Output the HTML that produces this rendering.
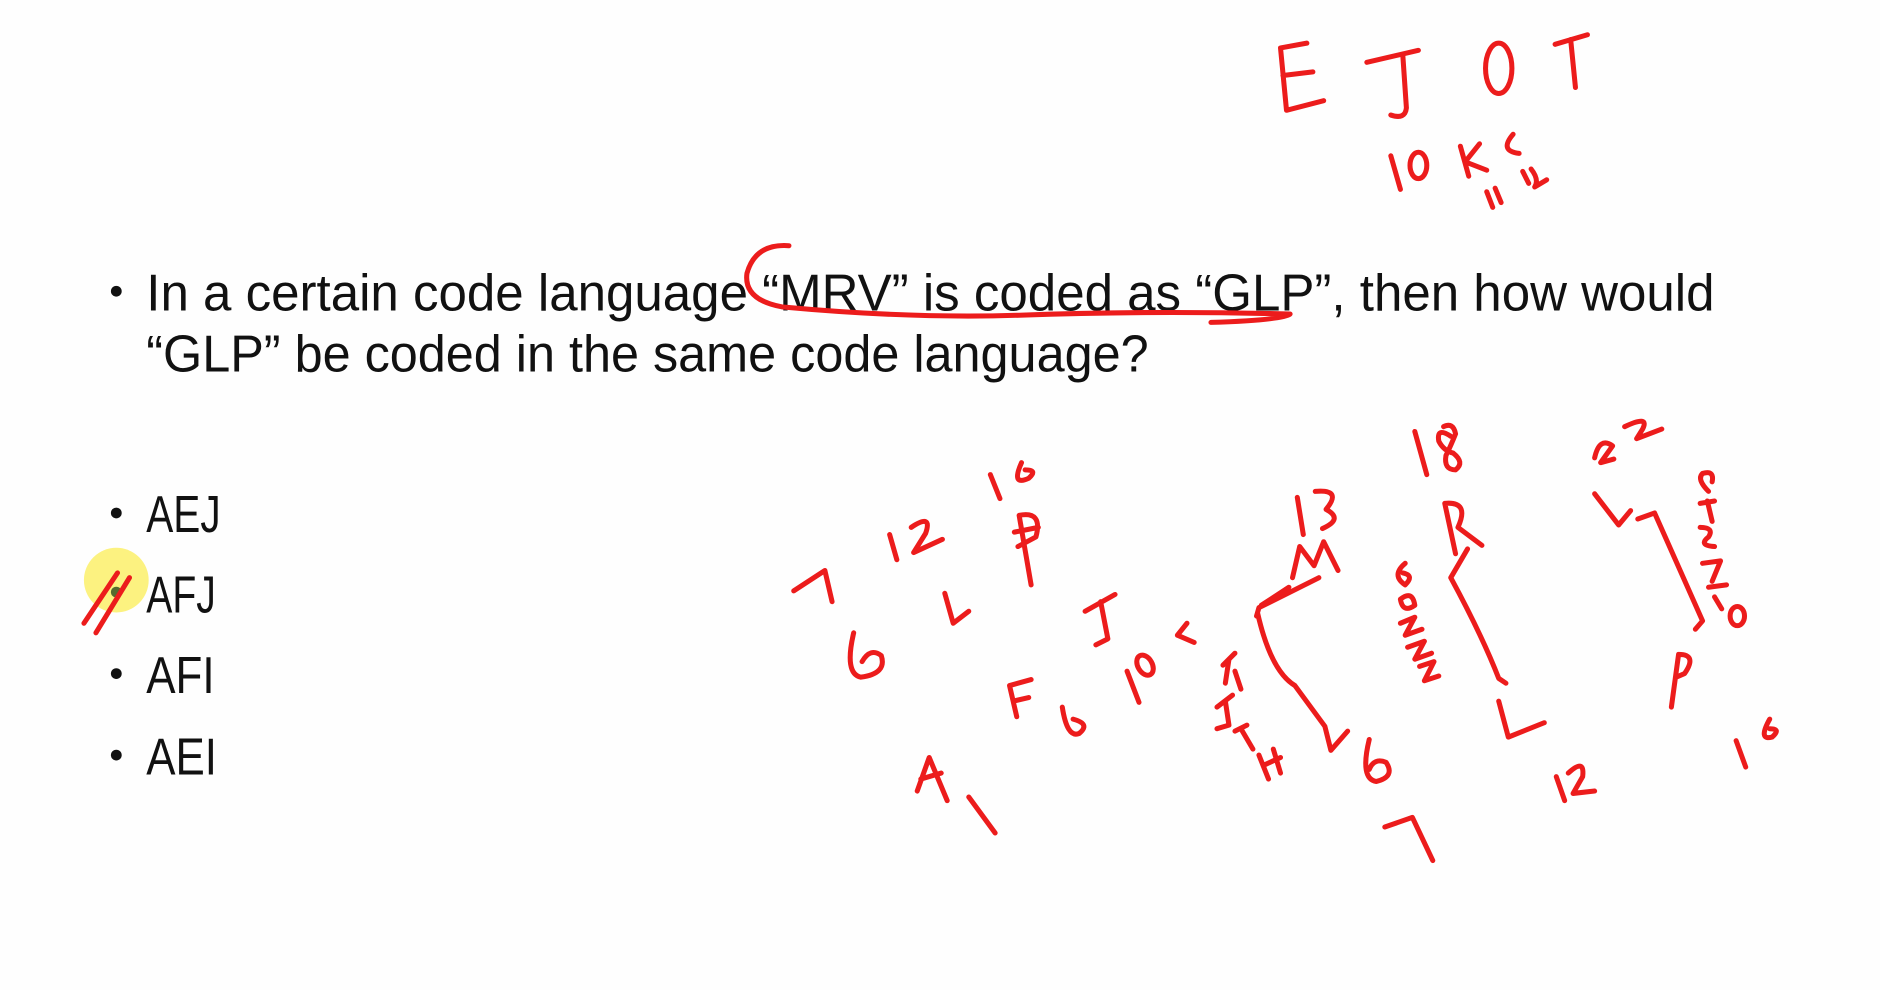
<!DOCTYPE html>
<html><head><meta charset="utf-8"><style>
html,body{margin:0;padding:0;background:#fff;width:1880px;height:990px;overflow:hidden}
svg{display:block}
</style></head><body>
<svg width="1880" height="990" viewBox="0 0 1568 826" preserveAspectRatio="none" xmlns="http://www.w3.org/2000/svg">
<rect width="1568" height="826" fill="#fefefe"/>
<circle cx="97" cy="484" r="27" fill="#fbf06a" opacity="0.85"/>
<g fill="#111" font-family="Liberation Sans, sans-serif" font-size="43">
<circle cx="97" cy="243" r="4.5"/>
<text x="122" y="259" textLength="1308" lengthAdjust="spacingAndGlyphs">In a certain code language “MRV” is coded as “GLP”, then how would</text>
<text x="122" y="310" textLength="836" lengthAdjust="spacingAndGlyphs">“GLP” be coded in the same code language?</text>
<circle cx="97" cy="428" r="4.5"/>
<text x="122" y="444" textLength="62" lengthAdjust="spacingAndGlyphs">AEJ</text>
<circle cx="97" cy="494" r="4.5" fill="#556b2f"/>
<text x="122" y="511" textLength="58" lengthAdjust="spacingAndGlyphs">AFJ</text>
<circle cx="97" cy="562" r="4.5"/>
<text x="122" y="578" textLength="57" lengthAdjust="spacingAndGlyphs">AFI</text>
<circle cx="97" cy="630" r="4.5"/>
<text x="122" y="646" textLength="59" lengthAdjust="spacingAndGlyphs">AEI</text>
</g>
<g fill="none" stroke="#ec1c1c" stroke-width="4.2" stroke-linecap="round" stroke-linejoin="round">
<path d="M1090,36 L1068,40 L1073,92 L1104,84 M1070,63 L1095,60"/>
<path d="M1140,52 L1183,42 M1170,46 L1173,90 Q1172,100 1160,96"/>
<ellipse cx="1250" cy="57" rx="11" ry="21"/>
<path d="M1297,37 L1324,29 M1310,33 L1314,73"/>
<path d="M1160,130 L1168,158"/>
<ellipse cx="1183" cy="138" rx="7" ry="11"/>
<path d="M1218,122 L1225,147 M1234,120 L1222,135 L1240,142"/>
<path d="M1262,112 Q1250,126 1267,128"/>
<path d="M1240,160 L1245,173 M1247,157 L1252,169 M1270,143 L1275,153 M1277,141 Q1284,150 1280,156 L1290,150"/>
<path d="M658,205 Q630,203 623,228 Q620,250 652,256 Q760,266 850,263 Q960,259 1076,262 Q1070,267 1010,269"/>
<path d="M70,520 L98,478 M80,528 L108,482"/>
<path d="M662,493 L688,476 L694,502"/>
<path d="M712,528 Q704,562 718,565 Q740,562 735,547 Q726,540 719,552"/>
<path d="M748,467 L742,446 M760,440 Q778,428 772,445 L762,461 L786,450"/>
<path d="M826,396 L834,416 M852,386 Q843,406 858,399 Q866,392 855,392"/>
<path d="M788,495 L795,520 L808,510"/>
<path d="M860,488 L850,430 Q870,426 864,448 L849,456 M846,444 L866,440"/>
<path d="M905,510 L930,496 M918,502 L924,533 L914,538"/>
<path d="M848,598 L842,572 L860,567 M845,585 L858,582"/>
<path d="M886,590 Q890,616 900,612 Q910,604 895,600"/>
<path d="M950,586 L940,560"/>
<ellipse cx="955" cy="555" rx="6" ry="9" transform="rotate(-30 955 555)"/>
<path d="M990,520 L982,530 L996,536"/>
<path d="M1020,555 L1030,545 M1025,550 L1022,570 M1030,560 L1035,575"/>
<path d="M1015,590 L1028,580 M1022,585 L1025,605 L1015,608"/>
<path d="M1030,610 L1040,605 M1035,608 L1045,625"/>
<path d="M1050,630 L1058,650 M1062,625 L1068,645 M1055,638 L1068,632"/>
<path d="M765,660 L775,632 L790,668 M768,650 L785,645 M808,665 L830,695"/>
<path d="M1082,415 L1087,446 M1097,410 Q1120,408 1106,425 Q1121,433 1103,441"/>
<path d="M1078,482 L1084,456 L1096,472 L1104,452 L1116,476"/>
<path d="M1100,482 L1050,507 L1048,514 M1075,490 L1052,505 M1049,512 Q1060,560 1080,572 L1105,606 L1110,626 L1124,610"/>
<path d="M1142,617 Q1134,650 1148,652 Q1164,648 1156,636 Q1146,632 1142,642"/>
<path d="M1155,690 L1178,682 L1195,718"/>
<path d="M1180,360 L1190,396"/>
<path d="M1210,364 Q1198,356 1200,368 Q1204,376 1212,378 Q1222,386 1214,392 Q1204,392 1206,380 Q1210,372 1214,362 Q1212,352 1204,356"/>
<path d="M1214,462 L1205,420 Q1226,418 1216,440 L1236,455"/>
<path d="M1224,458 L1210,482 Q1236,530 1250,566 L1256,570"/>
<path d="M1250,585 L1258,615 L1288,603"/>
<path d="M1172,470 Q1160,480 1172,488 Q1180,480 1170,478 M1168,500 Q1178,492 1180,505 Q1170,512 1168,500 M1168,520 L1180,515 L1172,530 L1186,525 M1174,540 L1188,535 L1180,550 L1194,545 M1184,556 L1196,552 L1188,568 L1200,564"/>
<path d="M1330,382 Q1334,364 1345,372 L1335,386 L1346,383 M1355,356 Q1376,346 1370,358 L1365,366 L1386,358"/>
<path d="M1330,412 L1350,438 L1360,426"/>
<path d="M1366,433 L1380,428 L1420,518 L1414,525"/>
<path d="M1425,410 Q1415,400 1420,395 Q1430,392 1428,402 M1418,420 L1430,418 M1424,418 L1428,435 M1418,440 Q1430,440 1425,448 Q1416,455 1430,456 M1420,470 L1435,468 L1428,485 M1425,490 L1440,488 M1430,498 L1436,508"/>
<ellipse cx="1449" cy="514" rx="6" ry="8"/>
<path d="M1394,590 L1400,546 Q1416,546 1405,562 L1398,565"/>
<path d="M1305,668 L1298,648 M1308,645 Q1322,632 1320,648 L1312,662 L1330,660"/>
<path d="M1456,640 L1448,618 M1476,600 Q1466,618 1478,615 Q1486,608 1476,608"/>
</g>
</svg>
</body></html>
